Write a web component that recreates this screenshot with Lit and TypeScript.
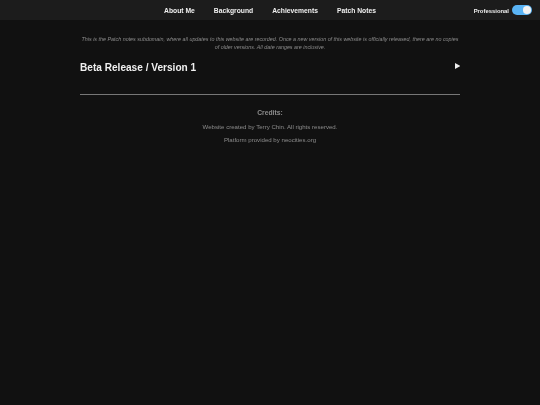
import { LitElement, html, css } from "lit";
import { customElement } from "lit/decorators.js";

@customElement("app-root")
export class AppRoot extends LitElement {
  static styles = css`
    :host { display: block; width: 540px; height: 405px; background: #111; font-family: "Liberation Sans", Arial, sans-serif; overflow: hidden; }
    .page { will-change: transform; height: 405px; }
    .bar { height: 20px; background: #1c1c1c; display: grid; grid-template-columns: 1fr auto 1fr; align-items: center; }
    .links { grid-column: 2; display: flex; gap: 19px; font-size: 6.75px; font-weight: 700; color: #f0f0f0; }
    .mode { grid-column: 3; justify-self: end; display: flex; align-items: center; gap: 3px; padding-right: 8px; font-size: 5.9px; font-weight: 700; color: #f0f0f0; }
    .mode span { padding-top: 1px; }
    .switch { width: 20px; height: 10px; border-radius: 5px; background: #5ab4f5; display: flex; justify-content: flex-end; align-items: center; padding: 0 1.5px; box-sizing: border-box; }
    .knob { width: 7.5px; height: 7.5px; border-radius: 50%; background: #f2f2f2; }
    main { padding: 15px 80px 0; }
    .intro { margin: 0; font-size: 5.36px; line-height: 8px; font-style: italic; color: #8c8c8c; text-align: center; }
    .head { display: flex; justify-content: space-between; align-items: flex-start; margin-top: 8px; height: 35px; }
    h2 { margin: 1px 0 0; font-size: 10.1px; line-height: 16px; color: #f0f0f0; font-weight: 700; }
    .arrow { width: 5.5px; height: 6px; margin-top: 4px; }
    .arrow svg { display: block; width: 5.5px; height: 6px; }
    hr { border: 0; height: 1px; background: #777; margin: 0; }
    .credits { text-align: center; color: #8c8c8c; font-size: 6.1px; }
    .credits h3 { margin: 14px 0 0; font-size: 6.75px; font-weight: 700; color: #8c8c8c; line-height: 8px; }
    .credits p { margin: 6px 0 0; line-height: 7px; }
    .credits p + p { margin-top: 6px; }
  `;
  render() {
    return html`
      <div class="page">
      <div class="bar">
        <div class="links"><span>About Me</span><span>Background</span><span>Achievements</span><span>Patch Notes</span></div>
        <div class="mode"><span>Professional</span><div class="switch"><div class="knob"></div></div></div>
      </div>
      <main>
        <p class="intro">This is the Patch notes subdomain, where all updates to this website are recorded. Once a new version of this website is officially released, there are no copies of older versions. All date ranges are inclusive.</p>
        <div class="head"><h2>Beta Release / Version 1</h2><div class="arrow"><svg viewBox="0 0 6 6" preserveAspectRatio="none"><path d="M0 0L6 3L0 6Z" fill="#eee"/></svg></div></div>
        <hr />
        <div class="credits">
          <h3>Credits:</h3>
          <p>Website created by Terry Chin. All rights reserved.</p>
          <p>Platform provided by neocities.org</p>
        </div>
      </main>
      </div>
    `;
  }
}
